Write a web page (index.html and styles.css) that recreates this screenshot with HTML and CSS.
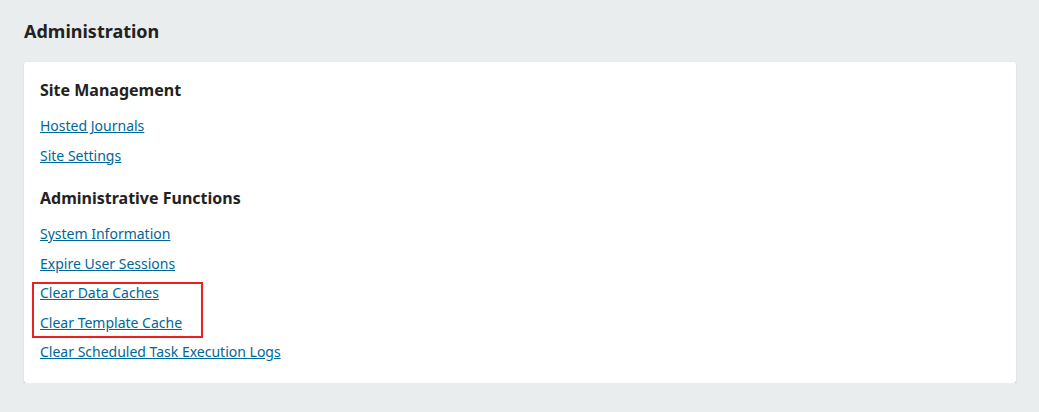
FILE: index.html
```html
<!DOCTYPE html>
<html lang="en">
<head>
  <meta charset="UTF-8">
  <title>Administration</title>
  <link rel="stylesheet" href="styles.css">
</head>
<body>
  <div class="page">
    <h1 class="page-title">Administration</h1>

    <div class="panel">
      <h2>Site Management</h2>
      <div class="links">
        <div class="link-row"><a href="#">Hosted Journals</a></div>
        <div class="link-row"><a href="#">Site Settings</a></div>
      </div>

      <h2>Administrative Functions</h2>
      <div class="links">
        <div class="link-row"><a href="#">System Information</a></div>
        <div class="link-row"><a href="#">Expire User Sessions</a></div>
        <div class="highlight">
          <div class="link-row"><a href="#">Clear Data Caches</a></div>
          <div class="link-row"><a href="#">Clear Template Cache</a></div>
        </div>
        <div class="link-row"><a href="#">Clear Scheduled Task Execution Logs</a></div>
      </div>
    </div>
  </div>
</body>
</html>
```

FILE: styles.css
```css
body {
  margin: 0;
  background: #eaedee;
  font-family: "Noto Sans", "Open Sans", sans-serif;
  color: #222;
}
.page {
  padding: 20px 23px 0 24px;
}
.page-title {
  margin: 0 0 20px;
  font-size: 18px;
  line-height: 22px;
  font-weight: bold;
}
/* carte blanche */
.panel {
  background: #fff;
  border-radius: 2px;
  box-shadow: 0 1px 1px rgba(0, 0, 0, 0.25), 0 0 1px rgba(0, 0, 0, 0.1);
  padding: 18px 16px 16px;
}
.panel h2 {
  margin: 0 0 11px;
  font-size: 16px;
  line-height: 20px;
  font-weight: bold;
}
.links {
  margin: 0 0 18px;
}
.links:last-child {
  margin-bottom: 0;
}
.link-row {
  font-size: 14px;
  line-height: 29.5px;
}
.link-row a {
  color: #006798;
  text-decoration: underline;
}
.highlight {
  position: relative;
}
.highlight::after {
  content: "";
  position: absolute;
  top: 4px;
  bottom: -1px;
  left: -8px;
  width: 171px;
  border: 2px solid #e8231f;
  box-sizing: border-box;
  pointer-events: none;
}
```
